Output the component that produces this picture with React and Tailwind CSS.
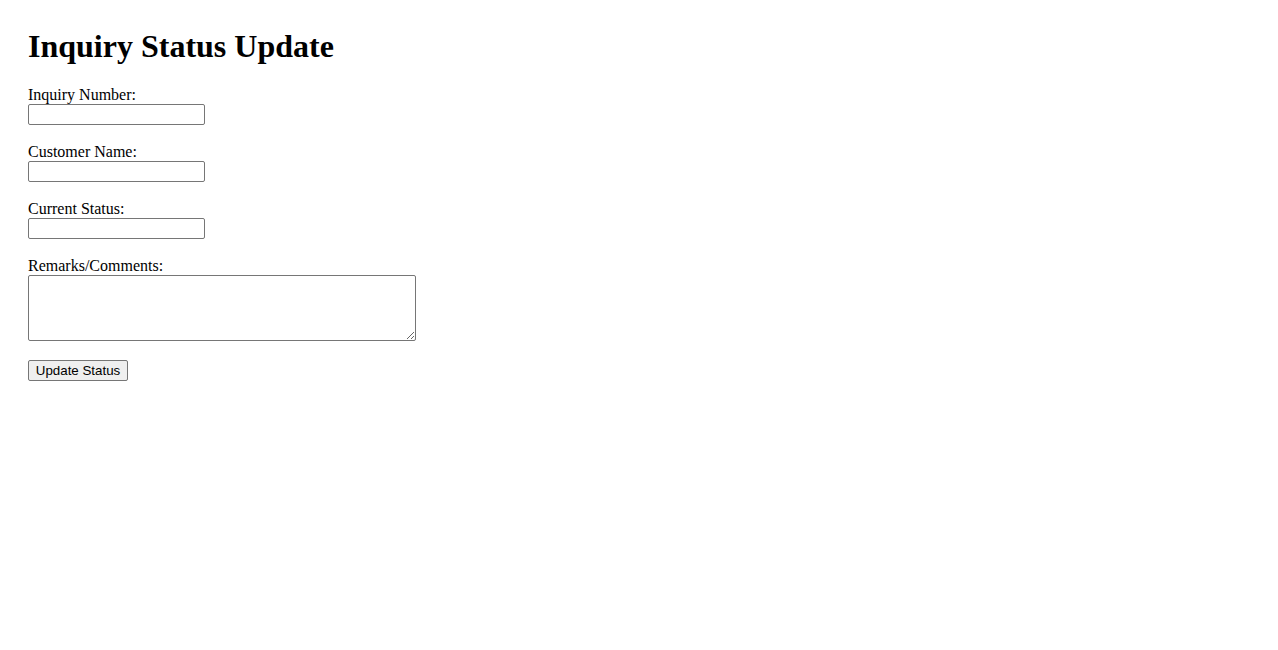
export default function App() {
  const field = "block w-[177px] h-[21px] border border-[#767676] rounded-[2px] bg-white px-[2px] py-[1px] text-[13.33px] outline-none";
  return (
    <div className="min-h-[650px] bg-white text-black p-[28px] font-['Liberation_Serif',serif]">
      <h1 className="text-[32px] font-bold leading-[37px] mb-[21px]">Inquiry Status Update</h1>
      <form className="flex flex-col" onSubmit={(e) => e.preventDefault()}>
        <label className="block text-[16px] leading-[18px]">Inquiry Number:</label>
        <input type="text" className={field} />
        <div className="h-[18px]" />
        <label className="block text-[16px] leading-[18px]">Customer Name:</label>
        <input type="text" className={field} />
        <div className="h-[18px]" />
        <label className="block text-[16px] leading-[18px]">Current Status:</label>
        <input type="text" className={field} />
        <div className="h-[18px]" />
        <label className="block text-[16px] leading-[18px]">Remarks/Comments:</label>
        <textarea className="block w-[388px] h-[66px] border border-[#767676] rounded-[2px] bg-white p-[2px] text-[13.33px] outline-none" />
        <div className="h-[17px]" />
        <div>
          <button
            type="submit"
            className="h-[21px] w-[100px] border border-[#767676] rounded-[2px] bg-[#efefef] px-[6px] text-[13.33px] leading-[15px] text-black font-['Liberation_Sans',Arial,sans-serif]"
          >
            Update Status
          </button>
        </div>
      </form>
    </div>
  );
}
